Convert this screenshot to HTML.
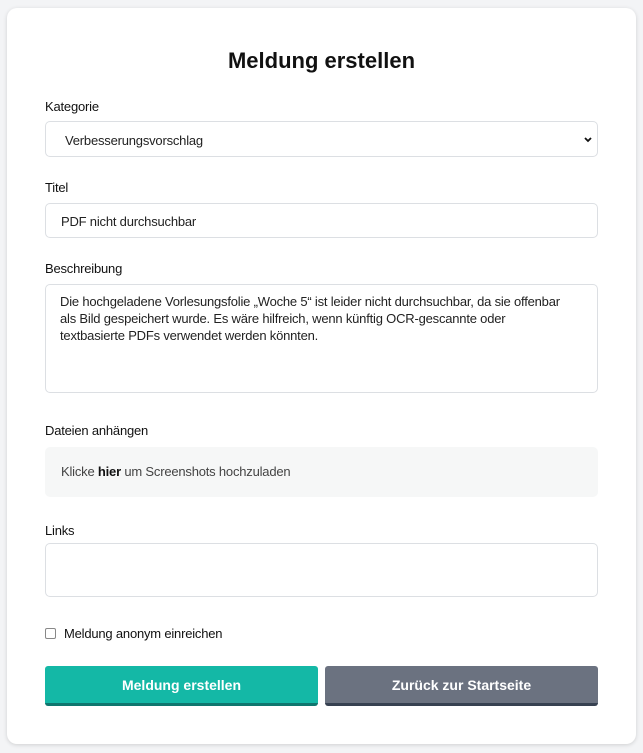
<!DOCTYPE html>
<html><head><meta charset="utf-8"><style>
*{box-sizing:border-box;margin:0;padding:0}
body{width:643px;height:753px;background:#f3f4f6;font-family:"Liberation Sans",sans-serif;color:#111;position:relative;overflow:hidden}
.card{position:absolute;left:7px;top:8px;width:629px;height:736px;background:#fff;border-radius:10px;box-shadow:0 1px 4px rgba(0,0,0,.15)}
.a{position:absolute}
h1{position:absolute;left:0;width:643px;top:48px;text-align:center;font-size:22px;font-weight:bold}
.lbl{position:absolute;left:45px;font-size:13px;letter-spacing:-0.2px;color:#111}
.box{position:absolute;left:45px;width:553px;border:1px solid #dcdfe3;border-radius:5px;background:#fff;font-size:13px;letter-spacing:-0.2px;color:#222}
.btn{position:absolute;top:666px;height:40px;border-radius:3px;color:#fff;font-weight:bold;font-size:14px;text-align:center;line-height:39px}
</style></head><body>
<div class="card"></div>
<h1>Meldung erstellen</h1>
<div class="lbl" style="top:99px">Kategorie</div>
<div class="box" style="top:121px;height:36px;padding:11px 0 0 19px">Verbesserungsvorschlag
<svg class="a" style="right:4px;top:14px" width="10" height="8" viewBox="0 0 10 8"><path d="M2 2l3 3 3-3" stroke="#111" stroke-width="1.8" fill="none"/></svg></div>
<div class="lbl" style="top:180px">Titel</div>
<div class="box" style="top:203px;height:35px;padding:10px 0 0 15px">PDF nicht durchsuchbar</div>
<div class="lbl" style="top:261px">Beschreibung</div>
<div class="box" style="top:284px;height:109px;padding:8px 0 0 14px;line-height:17px">Die hochgeladene Vorlesungsfolie „Woche 5“ ist leider nicht durchsuchbar, da sie offenbar<br>als Bild gespeichert wurde. Es wäre hilfreich, wenn künftig OCR-gescannte oder<br>textbasierte PDFs verwendet werden könnten.</div>
<div class="lbl" style="top:423px">Dateien anhängen</div>
<div class="box" style="top:447px;height:50px;border:none;background:#f6f7f7;padding:17px 0 0 16px;color:#444">Klicke <b style="color:#111">hier</b> um Screenshots hochzuladen</div>
<div class="lbl" style="top:523px">Links</div>
<div class="box" style="top:543px;height:54px"></div>
<div class="a" style="left:45px;top:628px;width:11px;height:11px;border:1px solid #888;border-radius:2px"></div>
<div class="lbl" style="left:64px;top:626px">Meldung anonym einreichen</div>
<div class="btn" style="left:45px;width:273px;background:#14b8a6;border-bottom:3px solid #0f766e">Meldung erstellen</div>
<div class="btn" style="left:325px;width:273px;background:#6b7280;border-bottom:3px solid #374151">Zurück zur Startseite</div>
</body></html>
